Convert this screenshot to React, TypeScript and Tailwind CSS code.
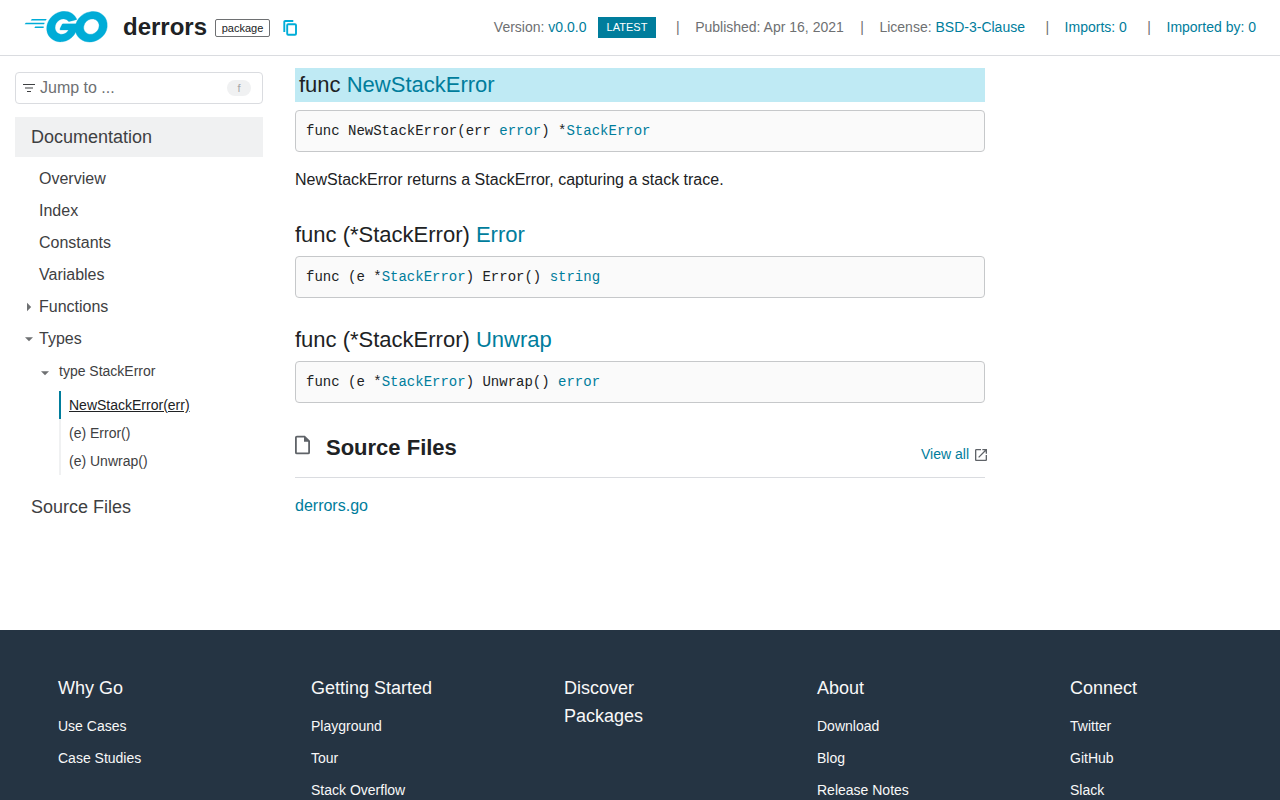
import type { ReactNode } from 'react';

function GoLogo() {
  return (
    <svg className="mb-0.5 h-[32px] w-[85px] shrink-0" viewBox="24.2 77.4 209 79.7" fill="#00acd7">
      <path d="M40.2,101.1c-0.4,0-0.5-0.2-0.3-0.5l2.1-2.7c0.2-0.3,0.7-0.5,1.1-0.5l35.7,0c0.4,0,0.5,0.3,0.3,0.6l-1.7,2.6c-0.2,0.3-0.7,0.6-1,0.6L40.2,101.1z" />
      <path d="M25.1,110.3c-0.4,0-0.5-0.2-0.3-0.5l2.1-2.7c0.2-0.3,0.7-0.5,1.1-0.5l45.6,0c0.4,0,0.6,0.3,0.5,0.6l-0.8,2.4c-0.1,0.4-0.5,0.6-0.9,0.6L25.1,110.3z" />
      <path d="M49.3,119.5c-0.4,0-0.5-0.3-0.3-0.6l1.4-2.5c0.2-0.3,0.6-0.6,1-0.6l20,0c0.4,0,0.6,0.3,0.6,0.7l-0.2,2.4c0,0.4-0.4,0.7-0.7,0.7L49.3,119.5z" />
      <path d="M153.1,99.3c-6.3,1.6-10.6,2.8-16.8,4.4c-1.5,0.4-1.6,0.5-2.9-1c-1.5-1.7-2.6-2.8-4.7-3.8c-6.3-3.1-12.4-2.2-18.1,1.5c-6.8,4.4-10.3,10.9-10.2,19c0.1,8,5.6,14.6,13.5,15.7c6.8,0.9,12.5-1.5,17-6.6c0.9-1.1,1.7-2.3,2.7-3.7c-3.6,0-8.1,0-19.3,0c-2.1,0-2.6-1.3-1.9-3c1.3-3.1,3.7-8.3,5.1-10.9c0.3-0.6,1-1.6,2.5-1.6c5.1,0,23.9,0,36.4,0c-0.2,2.7-0.2,5.4-0.6,8.1c-1.1,7.2-3.8,13.8-8.2,19.6c-7.2,9.5-16.6,15.4-28.5,17c-9.8,1.3-18.9-0.6-26.9-6.6c-7.4-5.6-11.6-13-12.7-22.2c-1.3-10.9,1.9-20.7,8.5-29.3c7.1-9.3,16.5-15.2,28-17.3c9.4-1.7,18.4-0.6,26.5,4.9c5.3,3.5,9.1,8.3,11.6,14.1C154.7,98.5,154.3,99,153.1,99.3z" stroke="#00acd7" strokeWidth="0.6" />
      <path d="M186.2,154.6c-9.1-0.2-17.4-2.8-24.4-8.8c-5.9-5.1-9.6-11.6-10.8-19.3c-1.8-11.3,1.3-21.3,8.1-30.2c7.3-9.6,16.1-14.6,28-16.7c10.2-1.8,19.8-0.8,28.5,5.1c7.9,5.4,12.8,12.7,14.1,22.3c1.7,13.5-2.2,24.5-11.5,33.9c-6.6,6.7-14.7,10.9-24,12.8C191.5,154.2,188.8,154.3,186.2,154.6z M210,114.2c-0.1-1.3-0.1-2.3-0.3-3.3c-1.8-9.9-10.9-15.5-20.4-13.3c-9.3,2.1-15.3,8-17.5,17.4c-1.8,7.8,2,15.7,9.2,18.9c5.5,2.4,11,2.1,16.3-0.6C205.2,129.2,209.5,123.1,210,114.2z" stroke="#00acd7" strokeWidth="1" />
    </svg>
  );
}

function Icon({ d, className, box = '0 0 16 16' }: { d: string; className: string; box?: string }) {
  return (
    <svg className={className} viewBox={box} fill="currentColor">
      <path d={d} />
    </svg>
  );
}

const FILTER = 'M2 3.9h12v1.2H2zM4 7.4h8v1.2H4zM6 10.9h4v1.2H6z';
const RIGHT = 'M6 3.8l4.2 4.2-4.2 4.2z';
const DOWN = 'M4 6.2h8l-4 4z';
const OPEN = 'M19 19H5V5h7V3H5c-1.11 0-2 .9-2 2v14c0 1.1.89 2 2 2h14c1.1 0 2-.9 2-2v-7h-2v7zM14 3v2h3.59l-9.83 9.83 1.41 1.41L19 6.41V10h2V3h-7z';

function A({ children }: { children: ReactNode }) {
  return (
    <a href="#" className="text-[#007d9c]">
      {children}
    </a>
  );
}

function Header() {
  return (
    <header className="flex h-14 shrink-0 items-center border-b border-[#dadce0] pr-6 pl-6">
      <GoLogo />
      <h1 className="mb-0.5 ml-[14px] text-[24px] leading-8 font-bold">derrors</h1>
      <span className="mt-px ml-[8px] flex h-[18px] w-[55px] items-center justify-center rounded-[2px] border border-[#6e7072] text-[11px]">
        package
      </span>
      <svg className="ml-[13px] size-4 text-[#00add8]" viewBox="0.7 0 16 16" fill="none" stroke="currentColor" strokeWidth="1.9">
        <path d="M2 12V2Q2 1 3 1H11" />
        <rect x="4.9" y="4.2" width="8.8" height="10.6" rx="1" />
      </svg>
      <div className="mb-0.5 ml-auto flex items-center text-[14px] leading-5 whitespace-pre text-[#6e7072]">
        <span>
          Version: <A>v0.0.0</A>
        </span>
        <span className="mt-0.5 ml-[11.5px] flex h-[21px] w-[58px] items-center justify-center bg-[#007d9c] pb-px text-[11px] text-white">
          LATEST
        </span>
        <span className="mr-[15.5px] ml-5">|</span>
        <span>Published: Apr 16, 2021</span>
        <span className="mr-[15.5px] ml-[16.5px]">|</span>
        <span>
          License: <A>BSD-3-Clause</A>
        </span>
        <span className="mr-[15.5px] ml-[20.5px]">|</span>
        <A>Imports: 0</A>
        <span className="mr-[15.5px] ml-[20.5px]">|</span>
        <A>Imported by: 0</A>
      </div>
    </header>
  );
}

function Sidebar() {
  return (
    <nav className="ml-[15px] w-[248px] shrink-0 pt-4 text-[#3e4042]">
      <div className="flex h-8 items-center rounded border border-[#dadce0] pr-[11px] pl-[5px] text-[#6e7072]">
        <Icon d={FILTER} className="size-4 text-[#3e4042]" />
        <span className="ml-[3px] text-[16px]">Jump to ...</span>
        <span className="ml-auto flex h-4 w-6 items-center justify-center rounded-full bg-[#f0f1f2] text-[11px] text-[#a5a7a9]">
          f
        </span>
      </div>
      <div className="mt-[13px] flex h-10 items-center bg-[#f0f1f2] pl-4 text-[18px]">Documentation</div>
      <ul className="mt-[6px] text-[16px] leading-8">
        {['Overview', 'Index', 'Constants', 'Variables'].map((label) => (
          <li key={label} className="pl-6">
            {label}
          </li>
        ))}
        <li className="flex items-center pl-[6px]">
          <Icon d={RIGHT} className="mr-[2px] size-4 text-[#6e7072]" />
          Functions
        </li>
        <li className="flex items-center pl-[6px]">
          <Icon d={DOWN} className="mr-[2px] size-4 text-[#6e7072]" />
          Types
        </li>
      </ul>
      <div className="flex items-center pl-[22px] text-[14px] leading-8">
        <Icon d={DOWN} className="mt-[3px] mr-[6px] size-4 text-[#6e7072]" />
        type StackError
      </div>
      <ul className="mt-1 ml-[44px] text-[14px] leading-7">
        <li className="border-l-2 border-[#007d9c] pl-2 text-[#202224] underline">NewStackError(err)</li>
        <li className="border-l-2 border-[#f0f1f2] pl-2">(e) Error()</li>
        <li className="border-l-2 border-[#f0f1f2] pl-2">(e) Unwrap()</li>
      </ul>
      <div className="mt-3 flex h-10 items-center pl-4 text-[18px]">Source Files</div>
    </nav>
  );
}

function Code({ children }: { children: ReactNode }) {
  return (
    <pre className="h-[42px] rounded border border-[#c6c8ca] bg-[#fafafa] pl-[10px] font-['Liberation_Mono',monospace] text-[14px] leading-[40px]">
      {children}
    </pre>
  );
}

function Content() {
  return (
    <main className="ml-8 w-[690px] pt-3">
      <h4 className="mb-2 h-[34px] bg-[#bfeaf4] pl-1 text-[22px] leading-[34px]">
        func <A>NewStackError</A>
      </h4>
      <Code>
        func NewStackError(err <A>error</A>) *<A>StackError</A>
      </Code>
      <p className="mt-4 text-[16px] leading-6">NewStackError returns a StackError, capturing a stack trace.</p>
      <h4 className="mt-7 mb-1.5 text-[22px] leading-[30px]">
        func (*StackError) <A>Error</A>
      </h4>
      <Code>
        func (e *<A>StackError</A>) Error() <A>string</A>
      </Code>
      <h4 className="mt-[27px] mb-1.5 text-[22px] leading-[30px]">
        func (*StackError) <A>Unwrap</A>
      </h4>
      <Code>
        func (e *<A>StackError</A>) Unwrap() <A>error</A>
      </Code>
      <div className="flex h-[75px] items-start border-b border-[#dadce0]">
        <svg className="mt-[32px] h-5 w-4 text-[#5f6368]" viewBox="0 0 16 20" fill="none" stroke="currentColor">
          <path d="M0.9 2.6Q0.9 1.6 1.9 1.6H9.5L14.1 6.2V17.4Q14.1 18.4 13.1 18.4H1.9Q0.9 18.4 0.9 17.4Z" strokeWidth="1.8" />
          <path d="M9 1V6.8H14.8Z" fill="currentColor" stroke="none" />
        </svg>
        <h2 className="mt-[29px] ml-[15px] text-[22px] leading-8 font-bold">Source Files</h2>
        <a href="#" className="mt-[41px] -mr-1 ml-auto flex items-center text-[14px] leading-5 text-[#007d9c]">
          View all
          <Icon d={OPEN} box="0 0 24 24" className="mt-[2px] ml-1 size-4 text-[#5f6368]" />
        </a>
      </div>
      <p className="mt-4 text-[16px] leading-6">
        <A>derrors.go</A>
      </p>
    </main>
  );
}

const columns = [
  { heads: ['Why Go'], links: ['Use Cases', 'Case Studies'] },
  { heads: ['Getting Started'], links: ['Playground', 'Tour', 'Stack Overflow'] },
  { heads: ['Discover', 'Packages'], links: [] },
  { heads: ['About'], links: ['Download', 'Blog', 'Release Notes'] },
  { heads: ['Connect'], links: ['Twitter', 'GitHub', 'Slack'] },
];

function Footer() {
  return (
    <footer className="flex h-[170px] shrink-0 bg-[#253443] pt-11 pl-[58px] text-[#f8f8f8]">
      {columns.map(({ heads, links }) => (
        <div key={heads[0]} className="w-[253px] shrink-0">
          {heads.map((head) => (
            <div key={head} className="text-[18px] leading-7">
              {head}
            </div>
          ))}
          <ul className="mt-2 text-[14px] leading-8">
            {links.map((link) => (
              <li key={link}>{link}</li>
            ))}
          </ul>
        </div>
      ))}
    </footer>
  );
}

export default function App() {
  return (
    <div className="flex h-screen flex-col overflow-hidden bg-white font-['Liberation_Sans',Arial,sans-serif] text-[#202224]">
      <Header />
      <div className="flex min-h-0 flex-1">
        <Sidebar />
        <Content />
      </div>
      <Footer />
    </div>
  );
}
